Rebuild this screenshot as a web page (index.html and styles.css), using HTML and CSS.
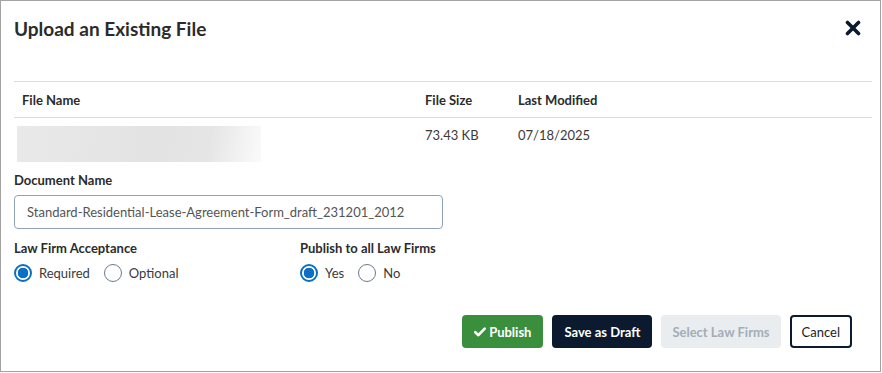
FILE: index.html
```html
<!DOCTYPE html>
<html lang="en">
<head>
    <meta charset="UTF-8">
    <meta name="viewport" content="width=device-width, initial-scale=1.0">
    <title>Upload an Existing File</title>
    <link rel="stylesheet" href="styles.css">
</head>
<body>
    <div class="dialog">
        <div class="dialog-header">
            <h1 class="title">Upload an Existing File</h1>
            <button class="close" aria-label="Close">
                <svg width="16" height="16" viewBox="0 0 16 16">
                    <path d="M2.5 2.5 L13.5 13.5 M13.5 2.5 L2.5 13.5" stroke="#0b1a2e" stroke-width="3.6" stroke-linecap="round"/>
                </svg>
            </button>
        </div>

        <table class="files">
            <colgroup>
                <col class="col-name">
                <col class="col-size">
                <col>
            </colgroup>
            <tr>
                <th>File Name</th>
                <th>File Size</th>
                <th>Last Modified</th>
            </tr>
            <tr>
                <td class="name-cell"><div class="blurred"></div></td>
                <td>73.43 KB</td>
                <td>07/18/2025</td>
            </tr>
        </table>

        <label class="field-label" for="docName">Document Name</label>
        <input id="docName" class="text-input" type="text" value="Standard-Residential-Lease-Agreement-Form_draft_231201_2012">

        <div class="options">
            <div class="group">
                <p class="field-label">Law Firm Acceptance</p>
                <div class="radios">
                    <span class="radio checked"></span><span class="radio-text">Required</span>
                    <span class="radio"></span><span class="radio-text">Optional</span>
                </div>
            </div>
            <div class="group">
                <p class="field-label">Publish to all Law Firms</p>
                <div class="radios">
                    <span class="radio checked"></span><span class="radio-text">Yes</span>
                    <span class="radio"></span><span class="radio-text">No</span>
                </div>
            </div>
        </div>

        <div class="actions">
            <button class="btn btn-publish">
                <svg width="12" height="10" viewBox="0 0 12 10">
                    <path d="M1.3 5.2 L4.4 8.2 L10.7 1.6" stroke="#fff" stroke-width="2.6" fill="none" stroke-linecap="round" stroke-linejoin="round"/>
                </svg>
                Publish
            </button>
            <button class="btn btn-draft">Save as Draft</button>
            <button class="btn btn-disabled">Select Law Firms</button>
            <button class="btn btn-cancel">Cancel</button>
        </div>
    </div>
</body>
</html>
```

FILE: styles.css
```css
body {
    margin: 0;
    font-family: Lato, "Liberation Sans", sans-serif;
    color: #2d2d2d;
    background: #fff;
}

.dialog {
    width: 881px;
    height: 372px;
    box-sizing: border-box;
    border: 1px solid #a3a3a3;
    padding: 0 8px 0 13px;
}

.dialog-header {
    display: flex;
    justify-content: space-between;
    align-items: center;
    height: 24px;
    margin-top: 15px;
}
.title {
    margin: 0;
    font-size: 19px;
    font-weight: 700;
    color: #2b2b2b;
}
.close {
    border: none;
    background: none;
    padding: 0;
    margin-right: 11px;
    width: 16px;
    height: 16px;
    display: flex;
}

.files {
    width: 100%;
    margin-top: 41px;
    border-collapse: collapse;
    table-layout: fixed;
    font-size: 13px;
}
.col-name { width: 403px; }
.col-size { width: 93px; }
.files th {
    text-align: left;
    font-weight: 700;
    color: #2b2b2b;
    height: 35px;
    padding: 0 8px;
    border-top: 1px solid #dcdcdc;
    border-bottom: 1px solid #dcdcdc;
}
.files td {
    vertical-align: top;
    padding: 8px 8px;
    line-height: 18px;
    color: #3a3a3a;
}
.files td.name-cell { padding-left: 3px; }
.blurred {
    width: 244px;
    height: 36px;
    background: linear-gradient(100deg, #e9e9e9 0%, #e3e3e3 55%, #e5e5e5 78%, #f6f6f6 95%, #fafafa 100%);
}

.field-label {
    display: block;
    margin: 1px 0 0;
    font-size: 13px;
    font-weight: 700;
    line-height: 18px;
    color: #2b2b2b;
}

.text-input {
    display: block;
    margin-top: 6px;
    width: 429px;
    height: 34px;
    box-sizing: border-box;
    border: 1px solid #8fa3b8;
    border-radius: 4px;
    padding: 0 12px;
    font-family: Lato, "Liberation Sans", sans-serif;
    font-size: 13px;
    color: #545454;
}

.options {
    display: flex;
    margin-top: 9px;
}
.group { width: 286px; }
.radios {
    display: flex;
    align-items: center;
    margin-top: 7px;
    height: 18px;
    font-size: 13px;
    color: #3a3a3a;
}
.radio {
    width: 18px;
    height: 18px;
    box-sizing: border-box;
    border: 1px solid #6b7b8c;
    border-radius: 50%;
    background: #fff;
    flex: none;
}
.radio.checked {
    border: 2px solid #0b6fc6;
    background: radial-gradient(circle, #0b6fc6 0, #0b6fc6 5px, #fff 5.6px);
}
.radio-text {
    margin-left: 7px;
    margin-right: 14px;
}

.actions {
    display: flex;
    justify-content: flex-end;
    gap: 9px;
    margin-top: 33px;
    padding-right: 20px;
}
.btn {
    height: 33px;
    border: none;
    border-radius: 4px;
    padding: 0 12px;
    font-family: Lato, "Liberation Sans", sans-serif;
    font-size: 13px;
    font-weight: 700;
    display: flex;
    align-items: center;
    gap: 3px;
}
.btn-publish { background: #3a8f3d; color: #fff; }
.btn-draft { background: #0b1a2e; color: #fff; }
.btn-disabled { background: #e9edf0; color: #a3adb6; padding: 0 11px; }
.btn-cancel {
    background: #fff;
    border: 2px solid #0b1a2e;
    color: #1c1c1c;
    font-weight: 400;
    padding: 0 10px;
}
```
